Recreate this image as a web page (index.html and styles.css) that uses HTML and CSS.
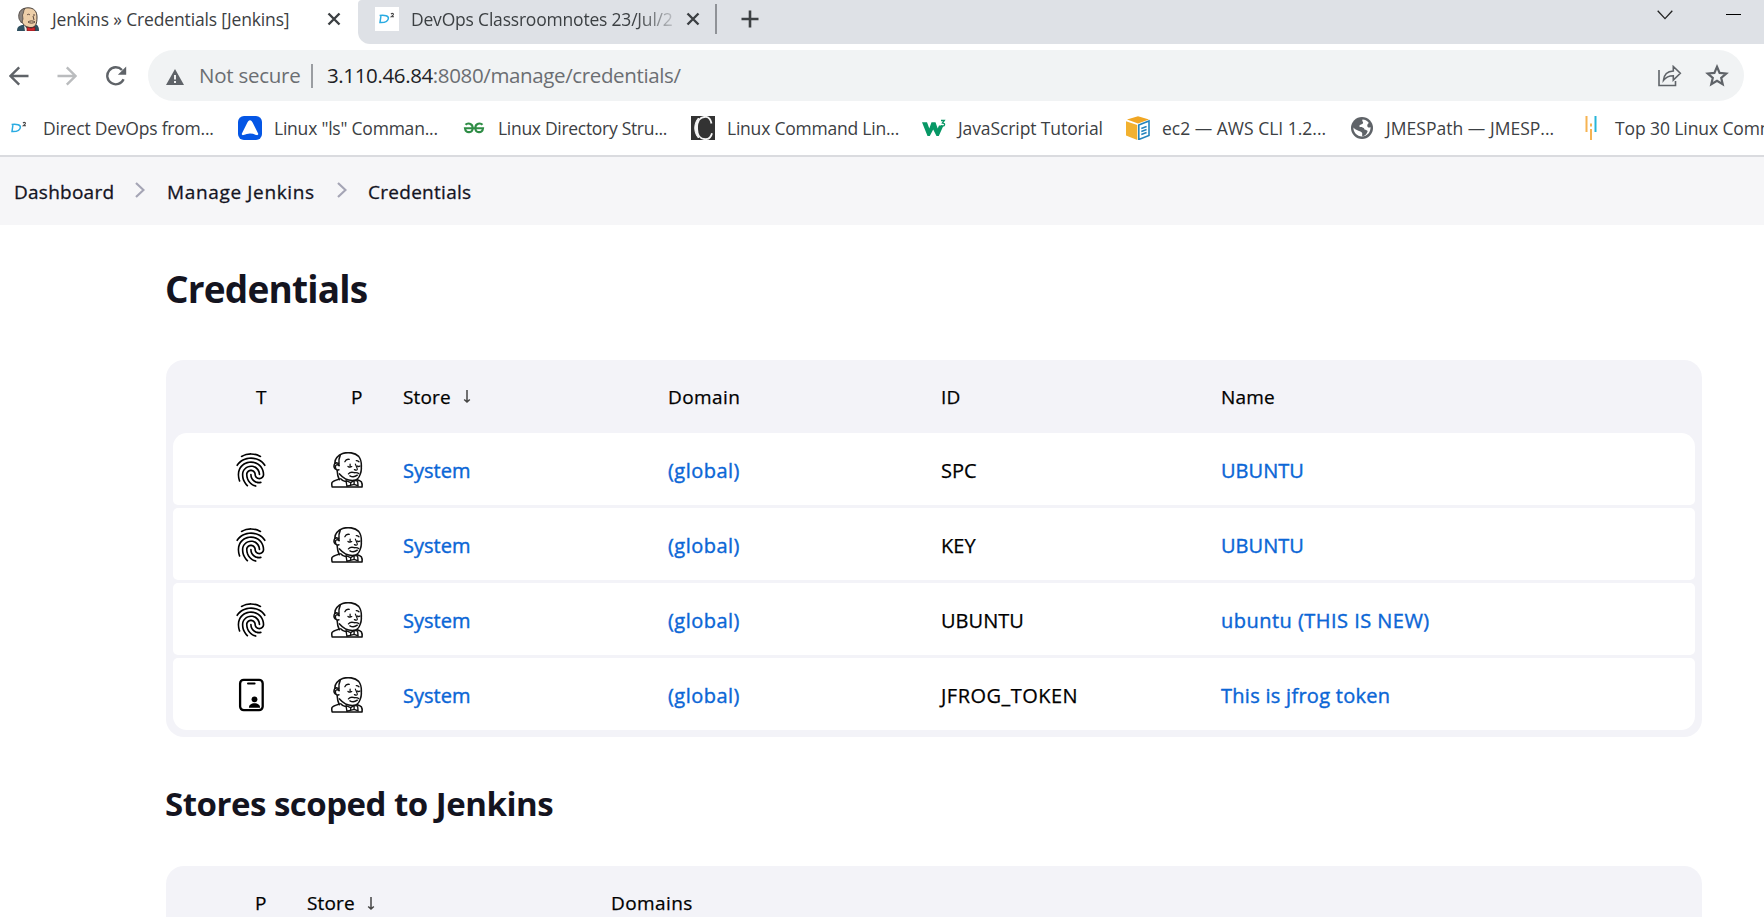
FILE: index.html
```html
<!DOCTYPE html>
<html lang="en">
<head>
<meta charset="utf-8">
<title>Credentials [Jenkins]</title>
<link rel="stylesheet" href="styles.css">
</head>
<body>
<svg class="defs" width="0" height="0">
  <symbol id="fingerprint" viewBox="0 0 512 512"><path d="M390.42 75.28a10.45 10.45 0 01-5.32-1.44C340.72 50.08 302.35 40 256.35 40c-45.77 0-89.23 11.28-128.76 33.84C122 77 115.11 74.8 111.87 69a12.4 12.4 0 014.63-16.32A281.81 281.81 0 01256.35 16c49.23 0 92.23 11.28 139.39 36.48a12 12 0 014.85 16.08 11.3 11.3 0 01-10.17 6.72zm-330.79 126a11.73 11.73 0 01-6.7-2.16 12.26 12.26 0 01-2.78-16.8c22.89-33.6 52-60 86.69-78.48 72.58-38.88 165.52-39.12 238.32-.24 34.68 18.48 63.8 44.64 86.69 78a12.29 12.29 0 01-2.78 16.8 11.26 11.26 0 01-16.18-2.88c-20.8-30.24-47.16-54-78.36-70.56-66.34-35.28-151.18-35.28-217.29.24-31.44 16.8-57.79 40.8-78.59 71a10 10 0 01-9.02 5.08zM204.1 491a10.66 10.66 0 01-8.09-3.6C175.9 466.48 165 453 149.55 424c-16-29.52-24.27-65.52-24.27-104.16 0-71.28 58.94-129.36 131.38-129.36S388 248.56 388 319.84a11.56 11.56 0 11-23.11 0c0-58.08-48.54-105.36-108.26-105.36S148.4 261.76 148.4 319.84c0 34.56 7.4 66.48 21.49 92.4 14.8 27.6 25 39.36 42.77 58.08a12.67 12.67 0 010 17A12.44 12.44 0 01204.1 491zm165.75-44.4c-27.51 0-51.78-7.2-71.66-21.36a129.1 129.1 0 01-55-105.36 11.57 11.57 0 1123.12 0 104.28 104.28 0 0044.84 85.44c16.41 11.52 35.6 17 58.72 17a147.41 147.41 0 0024-2.4c6.24-1.2 12.25 3.12 13.4 9.84a11.92 11.92 0 01-9.47 13.92 152.28 152.28 0 01-27.95 2.88zM323.38 496a13 13 0 01-3-.48c-36.76-10.56-60.8-24.72-86-50.4-32.37-33.36-50.16-77.76-50.16-125.28 0-38.88 31.9-70.56 71.19-70.56s71.2 31.68 71.2 70.56c0 25.68 21.5 46.56 48.08 46.56s48.08-20.88 48.08-46.56c0-90.48-75.13-163.92-167.59-163.92-65.65 0-125.75 37.92-152.79 96.72-9 19.44-13.64 42.24-13.64 67.2 0 18.72 1.61 48.24 15.48 86.64 2.32 6.24-.69 13.2-6.7 15.36a11.34 11.34 0 01-14.79-7 276.39 276.39 0 01-16.88-95c0-28.8 5.32-55 15.72-77.76 30.75-67 98.94-110.4 173.6-110.4 105.18 0 190.71 84.24 190.71 187.92 0 38.88-31.9 70.56-71.2 70.56S303.4 358.72 303.4 320c0-25.74-21.5-46.56-48.08-46.56s-48.08 20.88-48.08 46.56c0 41 15.26 79.44 43.23 108.48 22 22.56 43 35 75.59 44.16 6.24 1.68 9.71 8.4 8.09 14.64a11.39 11.39 0 01-10.77 8.72z"/></symbol>
  <symbol id="idcard" viewBox="0 0 36 36"><rect x="7.1" y="2.8" width="22.6" height="30.4" rx="3.6" fill="none" stroke="#000" stroke-width="2.3"/><path d="M15 6.6h6.600" stroke="#000" stroke-width="2" stroke-linecap="round"/><circle cx="21.500" cy="22.300" r="2.900"/><path d="M15.900 30.800c0-3 2.400-4.500 5.600-4.500s5.600 1.500 5.600 4.500z"/></symbol>
  <symbol id="butler" viewBox="0 0 34 37">
    <g fill="none" stroke="#111" stroke-width="1.600" stroke-linecap="round" stroke-linejoin="round">
      <path d="M5 17.500C2.900 15.500 3.800 12.900 4.700 11.500 4.200 7.500 7.500 3.300 12.500 1.500 18-.2 25 .6 29 4.500c2.400 3 3 7 2.700 11.500.3 3-.4 5-1.200 7-1 3.500-4 6.400-8.200 6.300-5.500-.2-9.500-2.800-13-6.800"/>
      <path d="M10 3.500C8.800 6 8.400 9 8.800 12.500M4.700 11.500c1.800-.9 4 .1 4.100 2.400"/>
      <path d="M8.800 14c-1.500-1.800-4-.8-3.800 1.500.1 2.300 1.800 3.600 3.700 2.800M6.800 18.500c.2 3.500.8 7.200 2.300 10"/>
      <path d="M9.300 27.800C6 28.800 2.900 29.600 1.500 31.500 1 33 1.400 34.500 1.700 35.900h30.800c.2-1.700.3-3.700-.8-5.300-1.200-1.100-2.400-1.700-4-2.200"/>
      <path d="M10.500 27.500c1.500 2 3.200 2.800 5.600 3.100M16 29.500l4.800 2 3.500-2.300 3.600.6.500 5.100-4-1.700-3 .8-4.500 1.200zM20.800 32v2M24.300 29.500v3.800" stroke-width="1.400"/>
      <path d="M14.800 10c.8-1.900 2.600-2.900 4.600-2.400M26.500 8.800c1 0 2 .4 2.800 1.200M18 14.800c1.300 1 2.700 1 3.900.2M20.200 12.500v3M27.400 14.300c1 .8 2 .8 3 .1" stroke-width="1.300"/>
      <path d="M25.600 12.500c.8 2.200 2.400 4.300 2 5.400-.5 1-1.800.8-3 .2" stroke-width="1.200"/>
      <path d="M18.500 22.500c2-2.400 4.500-1.800 6.200-1.200 1.800-.3 3.300-.1 4.200.8M20 24.500c2.500 1.500 5 1.300 7.600-.7" stroke-width="1.400"/>
    </g>
  </symbol>
  <symbol id="dsq" viewBox="0 0 24 24"><path d="M6 8.300 5 15.500c5.500.2 8.200-1.600 8.400-4.300.1-2.500-3.200-3.300-8.800-2.800" fill="none" stroke="#29abe2" stroke-width="1.500"/><path d="M16 7.100c1-1.200 2.800-.8 2.400.6-.3.900-1.700 1.500-2.300 2.100h2.900" fill="none" stroke="#444" stroke-width="1.100"/></symbol>
</svg>

<header class="browser">
  <div class="tabs">
    <div class="tab tab-active">
      <svg class="fav" viewBox="0 0 24 24"><path d="M1 24c0-3 1-5 5-6l13-1c3 1 4 3 4 7z" fill="#2f5060"/><path d="M3.500 11C2 4 7 .8 12 .8c6 0 9 3.700 9 9.200 0 6-1 10.500-6 10.500-5 0-8-2.500-9-6z" fill="#edcfa9" stroke="#453c36" stroke-width="1"/><path d="M3 12C1.800 5 5 2 9 1.500 7 4 8 6 6.500 8l.5 4-1.500 4z" fill="#8b8580" stroke="#453c36" stroke-width=".7"/><path d="M11 8c1-1 2-1 3 0M17 8h2M17 9l1 4M12 15c2-1.500 5-1.500 7 0-2 1.500-5 1.500-7 0" fill="none" stroke="#5a453a" stroke-width="1"/><path d="M8 18l5 6-4 0z" fill="#f2eee9"/><path d="m11 20 4 1.200L19 20v4h-8z" fill="#d6262c" stroke="#641719" stroke-width=".6"/></svg>
      <span class="tab-title">Jenkins » Credentials [Jenkins]</span>
      <svg class="x" viewBox="0 0 14 14"><path d="m1.500 1.500 11 11m0-11-11 11"/></svg>
    </div>
    <div class="tab tab-idle">
      <svg class="fav fav-white"><use href="#dsq"/></svg>
      <span class="tab-title tab-fade">DevOps Classroomnotes 23/Jul/2</span>
      <svg class="x" viewBox="0 0 14 14"><path d="m1.500 1.500 11 11m0-11-11 11"/></svg>
      <i class="tab-sep"></i>
      <svg class="plus" viewBox="0 0 18 18"><path d="M9 .5v17M.5 9h17"/></svg>
      <svg class="chev-down" viewBox="0 0 16 10"><path d="m.7.7 7.300 7.900L15.300.7"/></svg>
      <i class="minimize"></i>
    </div>
  </div>

  <div class="toolbar">
    <svg class="nav" viewBox="0 0 20 20"><path d="M19.500 10H2M10.200 1.300 1.500 10l8.700 8.700"/></svg>
    <svg class="nav nav-off" viewBox="0 0 20 20"><path d="M.5 10H18M9.800 1.300 18.500 10l-8.700 8.700"/></svg>
    <svg class="nav nav-reload" viewBox="0 0 22 20"><path d="M18.600 13.200A8.500 8.500 0 1 1 17 4"/><path class="solid" d="M21.200.5v8.300h-8.300z"/></svg>
    <div class="omnibox">
      <svg class="warn" viewBox="0 0 18 16"><path d="M9 0 18 16H0z" fill="#5f6368"/><path d="M9 6v4.500M9 12v2" stroke="#fff" stroke-width="1.800"/></svg>
      <span class="insecure">Not secure</span><i class="omni-sep"></i>
      <span class="url"><b>3.110.46.84</b>:8080/manage/credentials/</span>
      <svg class="share" viewBox="0 0 24 22"><path d="M1 5v15.500h16.500V16M5.500 15.300C6 9.500 9.500 6.300 15.300 6V1.500l7 6.800-7 6.800v-4.400c-4.300 0-7.300 1.300-9.800 4.600z"/></svg>
      <svg class="star" viewBox="0 0 24 23"><path d="m12 2.800 2.600 6.100 6.600.6-5 4.300 1.500 6.500-5.700-3.500-5.700 3.500 1.500-6.500-5-4.300 6.600-.6z"/></svg>
    </div>
  </div>

  <nav class="bookmarks">
    <a class="bm bm1"><svg><use href="#dsq"/></svg><span>Direct DevOps from...</span></a>
    <a class="bm bm2"><svg viewBox="0 0 24 24"><rect width="24" height="24" rx="6" fill="#0556e5"/><path d="M12 4.200c1.300 0 2 1 2.600 2.300l5.500 11c.5 1.200-.6 2.100-1.700 1.600-4.300-2-8.500-2-12.800 0-1.100.5-2.200-.4-1.700-1.600l5.500-11C10 5.200 10.700 4.200 12 4.200z" fill="#fff"/></svg><span>Linux "ls" Comman...</span></a>
    <a class="bm bm3"><svg viewBox="0 0 24 24"><path d="M3.500 8.800C5.500 6.600 10.700 7 10.700 12c0 5.500-7 5.500-7.700.3h18c-.7 5.200-7.700 5.200-7.700-.3 0-5 5.200-5.400 7.200-3.200" fill="none" stroke="#2f8d46" stroke-width="2.100"/></svg><span>Linux Directory Stru...</span></a>
    <a class="bm bm4"><svg viewBox="0 0 24 24"><path d="M0 0h24v24H0z" fill="#333"/><path d="M20.500 7.500C19.500 2.500 17 .8 14.500.8 8.800.8 6 5.500 6 12s2.800 11.200 8.500 11.200c3 0 5.500-2 6.500-6" fill="none" stroke="#f5f5f5" stroke-width="1.800"/><path d="M7.500 2C2.500 7 2.500 17 7.500 22 6 15 6 9 7.500 2z" fill="#f5f5f5" stroke="#f5f5f5"/></svg><span>Linux Command Lin...</span></a>
    <a class="bm bm5"><svg viewBox="0 0 24 24"><path d="M0 6.300h5l2.300 6.200 2.200-6.200h4l2.200 6.200L17 9.500h4.500L16.800 20h-2.300l-3.300-6.500L7.800 20H5.500z" fill="#079765"/><path d="M19 4.500h3.300L20.500 7c3 .1 2.700 3.300-.2 3.100l-1.300-.6" fill="none" stroke="#079765" stroke-width="1.300"/></svg><span>JavaScript Tutorial</span></a>
    <a class="bm bm6"><svg viewBox="0 0 24 24"><path d="m1 3.500 11-3.300 11 3.300-11 4z" fill="#f0a623"/><path d="M0 5.300 11.300 9v15L0 19.500z" fill="#f2b12f"/><path d="M12.800 9 23 5v14.500L12.800 23.500z" fill="#fff" stroke="#2484bd" stroke-width="1.600"/><path d="m15.300 12.500 5.300-2m-5.300 5 5.300-2m-5.300 5 5.300-2" stroke="#2484bd" stroke-width="1.500"/></svg><span>ec2 — AWS CLI 1.2...</span></a>
    <a class="bm bm7"><svg viewBox="0 0 24 24"><circle cx="12" cy="12" r="11" fill="#5f6368"/><path d="M12.500 3.500c-1 2 1.500 2.500.3 4-1.500 1.500-3.600.8-3.300 3 .3 2 4 .2 4.600 2 .6 2.500 3.300.7 3.500 3-1 2.500-2.300 4.300-5.300 4.700-.6-2 .7-2.700-.7-4C9.700 14.500 6.500 15 3.500 11.500 3 16 7 20.500 12 20.500s9-4.500 8.500-9.500c-1.500 1.500-3.500 0-3.200-1.800.2-1.600 1.500-1.500 1.300-2.700C16.800 4.500 15 3.600 12.500 3.500z" fill="#fff"/></svg><span>JMESPath — JMESP...</span></a>
    <a class="bm bm8"><svg viewBox="0 0 12 24"><path d="M1.500 0v16M6 13v11M6 7.500v3" stroke="#f6b352" stroke-width="2"/><path d="M10.500 0v16" stroke="#27b5d8" stroke-width="2"/></svg><span>Top 30 Linux Comm</span></a>
  </nav>
</header>

<nav class="crumbs">
  <a class="c1">Dashboard</a><svg viewBox="0 0 10 16"><path d="m1 1 7.500 7L1 15"/></svg>
  <a class="c2">Manage Jenkins</a><svg viewBox="0 0 10 16"><path d="m1 1 7.500 7L1 15"/></svg>
  <a class="c3">Credentials</a>
</nav>

<main class="page">
  <h1>Credentials</h1>
  <section class="table">
    <div class="head grid"><span class="h-t">T</span><span class="h-p">P</span><span class="sort">Store <svg viewBox="0 0 8 13"><path d="M4 0v11M1.200 9.500 4 12l2.800-2.500"/></svg></span><span class="wide">Domain</span><span>ID</span><span>Name</span></div>
    <div class="row grid"><svg class="ico"><use href="#fingerprint"/></svg><svg class="man"><use href="#butler"/></svg><a>System</a><a class="wide">(global)</a><span>SPC</span><a>UBUNTU</a></div>
    <div class="row grid"><svg class="ico"><use href="#fingerprint"/></svg><svg class="man"><use href="#butler"/></svg><a>System</a><a class="wide">(global)</a><span>KEY</span><a>UBUNTU</a></div>
    <div class="row grid"><svg class="ico"><use href="#fingerprint"/></svg><svg class="man"><use href="#butler"/></svg><a>System</a><a class="wide">(global)</a><span>UBUNTU</span><a class="wide">ubuntu (THIS IS NEW)</a></div>
    <div class="row grid"><svg class="ico"><use href="#idcard"/></svg><svg class="man"><use href="#butler"/></svg><a>System</a><a class="wide">(global)</a><span class="wide">JFROG_TOKEN</span><a class="wider">This is jfrog token</a></div>
  </section>
  <h2>Stores scoped to Jenkins</h2>
  <section class="table">
    <div class="head stores"><span>P</span><span class="sort">Store <svg viewBox="0 0 8 13"><path d="M4 0v11M1.200 9.500 4 12l2.800-2.500"/></svg></span><span class="wide">Domains</span></div>
  </section>
</main>
</body>
</html>
```

FILE: styles.css
```css
* { box-sizing: border-box; }
html, body { margin: 0; height: 917px; overflow: hidden; }
body { background: #fff; font-family: "Open Sans", "Noto Sans", sans-serif; color: #000; white-space: nowrap; }
svg { display: block; flex: none; }
.defs { position: absolute; }

.browser { height: 157px; border-bottom: 2px solid #dadbdf; color: #3c4043; font-size: 17.5px; }
.tabs { display: flex; height: 44px; }
.tab { display: flex; align-items: center; padding-bottom: 6px; }
.tab-active { width: 358px; padding-left: 16px; }
.tab-idle { flex: 1; padding-left: 17px; background: #dee1e6; border-radius: 4px 0 0 12px; }
.fav { width: 24px; height: 24px; margin-right: 12px; }
.fav-white { background: #fff; }
.tab-title { width: 275px; margin-top: -1px; letter-spacing: -.15px; }
.tab-fade { width: 262px; margin-right: 13px; overflow: hidden; letter-spacing: -.2px; -webkit-mask-image: linear-gradient(90deg, #000 86%, rgba(0,0,0,.2)); mask-image: linear-gradient(90deg, #000 86%, rgba(0,0,0,.2)); }
.x { width: 14px; height: 14px; fill: none; stroke: #3c4043; stroke-width: 2.4; }
.tab-sep { width: 2px; height: 30px; margin-left: 15px; background: #8f9297; }
.plus { width: 18px; height: 18px; margin-left: 24px; fill: none; stroke: #3c4043; stroke-width: 2.6; }
.chev-down { width: 16px; height: 10px; margin: 0 53px 9px auto; fill: none; stroke: #222; stroke-width: 1.3; }
.minimize { width: 15px; height: 1px; margin: 0 23px 9px 0; background: #000; }

.toolbar { display: flex; align-items: center; gap: 28px; height: 63px; padding: 0 20px 0 9px; }
.nav { width: 20px; height: 20px; fill: none; stroke: #5f6368; stroke-width: 2.4; }
.nav-off { stroke: #babcbe; }
.nav-reload { width: 22px; }
.nav .solid { fill: #5f6368; stroke: none; }
.omnibox { flex: 1; display: flex; align-items: center; height: 51px; margin-left: -7px; padding: 0 15px 0 18px; border-radius: 26px; background: #f1f3f4; font-size: 20.5px; color: #6b6e72; }
.warn { width: 18px; height: 16px; margin: 2px 15px 0 0; }
.insecure { width: 112px; margin-top: -2px; letter-spacing: -.25px; }
.omni-sep { width: 2px; height: 24px; margin-right: 14px; background: #9a9da1; }
.url { margin-top: -2px; letter-spacing: -.37px; }
.url b { font-weight: 400; color: #202124; }
.share { width: 24px; height: 22px; margin-left: auto; fill: none; stroke: #5f6368; stroke-width: 1.6; }
.star { width: 24px; height: 23px; margin-left: 23px; fill: none; stroke: #5f6368; stroke-width: 2.2; }

.bookmarks { display: flex; height: 42px; align-items: center; padding-left: 7px; }
.bm { display: flex; align-items: center; gap: 12px; letter-spacing: -.22px; }
.bm span { margin-top: -1px; }
.bm svg { width: 24px; height: 24px; }
.bm1 { width: 231px; }
.bm2 { width: 224px; letter-spacing: -.22px; }
.bm3 { width: 229px; letter-spacing: -.3px; }
.bm4 { width: 231px; }
.bm5 { width: 204px; letter-spacing: -.1px; }
.bm6 { width: 224px; letter-spacing: 0; }
.bm7 { width: 235px; letter-spacing: .03px; }
.bm1, .bm2, .bm3, .bm4, .bm5, .bm6, .bm7 { flex: none; }
.bm8 { gap: 18px; letter-spacing: -.1px; }
.bm8 svg { width: 12px; }

.crumbs { display: flex; align-items: center; height: 68px; padding: 0 0 2px 14px; background: #f6f6f8; font-size: 19px; color: #14141f; -webkit-text-stroke: .3px; }
.crumbs a { margin-top: 3px; }
.crumbs svg { width: 10px; height: 16px; fill: none; stroke: #a5a5b5; stroke-width: 2.2; }
.crumbs .c1 { width: 121px; letter-spacing: .25px; }
.crumbs .c2 { width: 170px; margin-left: 22px; letter-spacing: .65px; }
.crumbs .c3 { margin-left: 21px; letter-spacing: .28px; }

.page { padding: 0 62px 0 166px; }
h1, h2 { margin: 0 0 0 -1px; color: #14141f; font-weight: 700; }
h1 { height: 135px; padding-top: 39px; font-size: 37px; line-height: 50px; letter-spacing: -.8px; }
h2 { height: 129px; padding-top: 44px; font-size: 33px; line-height: 46px; letter-spacing: -.5px; }
.table { padding: 0 7px 7px; border-radius: 18px; background: #f3f3f8; }
.grid { display: grid; grid-template-columns: 115px 115px 265px 273px 280px 1fr; align-items: center; }
.head { height: 73px; font-size: 19px; letter-spacing: .15px; -webkit-text-stroke: .25px; }
.h-t { padding-left: 83px; }
.h-p { padding-left: 63px; }
.sort { display: flex; align-items: center; gap: 12px; }
.sort svg { width: 8px; height: 13px; fill: none; stroke: #444; stroke-width: 1.5; }
.row { height: 72px; margin-bottom: 3px; padding-top: 2px; border-radius: 5px; background: #fff; font-size: 20px; letter-spacing: .02px; -webkit-text-stroke: .25px; }
.row:nth-child(2) { border-radius: 14px 14px 5px 5px; }
.row:last-child { margin-bottom: 0; border-radius: 5px 5px 14px 14px; }
.row a { color: #0b66d6; -webkit-text-stroke: .4px; }
.row .wide { letter-spacing: .47px; }
.row .wider { letter-spacing: .28px; }
.head .wide { letter-spacing: .4px; }
.ico { width: 36px; height: 36px; margin-left: 60px; }
.man { width: 34px; height: 36px; margin-left: 42px; }
.stores { display: grid; grid-template-columns: 134px 304px 1fr; align-items: center; padding-top: 1px; }
.stores span:first-child { padding-left: 82px; }
```
